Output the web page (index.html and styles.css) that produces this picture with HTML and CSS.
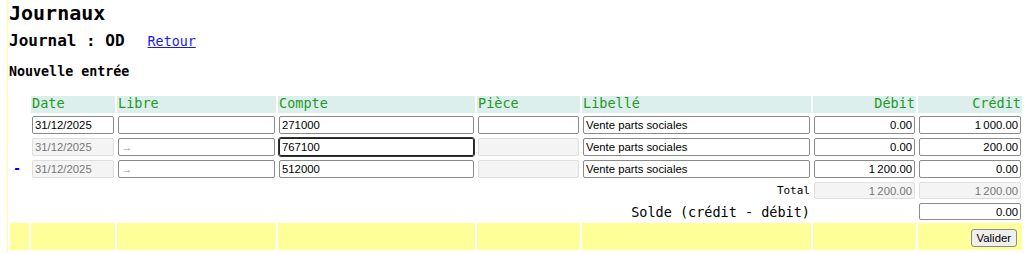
FILE: index.html
```html
<!DOCTYPE html>
<html lang="fr">
<head>
    <meta charset="UTF-8">
    <title>Journaux</title>
    <link rel="stylesheet" href="styles.css">
</head>
<body>
    <h1>Journaux</h1>
    <h2>Journal : OD<a class="retour" href="#">Retour</a></h2>
    <h3>Nouvelle entrée</h3>

    <form>
        <table class="ecriture">
            <colgroup>
                <col style="width: 19px">
                <col style="width: 84px">
                <col style="width: 159px">
                <col style="width: 197px">
                <col style="width: 103px">
                <col style="width: 229px">
                <col style="width: 103px">
                <col style="width: 104px">
            </colgroup>
            <tr class="entete">
                <th class="vide"></th>
                <th>Date</th>
                <th>Libre</th>
                <th>Compte</th>
                <th>Pièce</th>
                <th>Libellé</th>
                <th class="num">Débit</th>
                <th class="num">Crédit</th>
            </tr>
            <tr class="ligne">
                <td></td>
                <td><input type="text" value="31/12/2025"></td>
                <td><input type="text"></td>
                <td><input type="text" value="271000"></td>
                <td><input type="text"></td>
                <td><input type="text" value="Vente parts sociales"></td>
                <td><input class="num" type="text" value="0.00"></td>
                <td><input class="num" type="text" value="1&#8239;000.00"></td>
            </tr>
            <tr class="ligne">
                <td></td>
                <td><input class="grise" type="text" value="31/12/2025" disabled></td>
                <td><input type="text" placeholder="→"></td>
                <td><input class="actif" type="text" value="767100"></td>
                <td><input class="grise" type="text" disabled></td>
                <td><input type="text" value="Vente parts sociales"></td>
                <td><input class="num" type="text" value="0.00"></td>
                <td><input class="num" type="text" value="200.00"></td>
            </tr>
            <tr class="ligne">
                <td><a class="suppr" href="#">-</a></td>
                <td><input class="grise" type="text" value="31/12/2025" disabled></td>
                <td><input type="text" placeholder="→"></td>
                <td><input type="text" value="512000"></td>
                <td><input class="grise" type="text" disabled></td>
                <td><input type="text" value="Vente parts sociales"></td>
                <td><input class="num" type="text" value="1&#8239;200.00"></td>
                <td><input class="num" type="text" value="0.00"></td>
            </tr>
            <tr class="total">
                <td colspan="5"></td>
                <td class="etiquette">Total</td>
                <td><input class="num grise" type="text" value="1&#8239;200.00" disabled></td>
                <td><input class="num grise" type="text" value="1&#8239;200.00" disabled></td>
            </tr>
            <tr class="solde">
                <td colspan="5"></td>
                <td class="etiquette">Solde (crédit - débit)</td>
                <td></td>
                <td><input class="num" type="text" value="0.00"></td>
            </tr>
            <tr class="actions">
                <td></td>
                <td></td>
                <td></td>
                <td></td>
                <td></td>
                <td></td>
                <td></td>
                <td class="bouton"><button type="button">Valider</button></td>
            </tr>
        </table>
    </form>
</body>
</html>
```

FILE: styles.css
```css
body {
    font-family: "DejaVu Sans Mono", monospace;
    color: #000;
    background-color: #fff;
    margin: 0 0 0 7px;
    border-left: 1px solid #ffff99;
    min-height: 100vh;
}
h1 {
    font-size: 20px;
    line-height: 24px;
    margin: 1px 0 0;
    padding-left: 1px;
}
h2 {
    font-size: 16px;
    line-height: 21px;
    margin: 5px 0 0;
    padding-left: 1px;
}
.retour {
    font-size: 13.33px;
    font-weight: normal;
    color: #1a1ae6;
    margin-left: 23px;
}
h3 {
    font-size: 13.33px;
    line-height: 16px;
    margin: 12px 0 0;
    padding-left: 1px;
}
form {
    margin-top: 14px;
}
.ecriture {
    width: 100%;
    table-layout: fixed;
    border-spacing: 2px;
    border-collapse: separate;
}
.ecriture th {
    font-size: 13.5px;
    font-weight: normal;
    line-height: 15px;
    color: #229a22;
    background-color: #dcefed;
    text-align: left;
    padding: 0 1px 2px;
}
.ecriture th.vide {
    background-color: transparent;
}
.ecriture th.num {
    text-align: right;
}
.ecriture td {
    padding: 1px;
    vertical-align: middle;
}
input {
    display: block;
    width: 100%;
    height: 18px;
    box-sizing: border-box;
    margin: 0;
    padding: 0 2px;
    font-family: "Liberation Sans", Arial, sans-serif;
    font-size: 11.33px;
    color: #000;
    background-color: #fff;
    border: 1px solid #8a8a8a;
    border-radius: 2px;
}
input::placeholder {
    color: #9a9a9a;
}
input.num {
    text-align: right;
}
input.grise {
    background-color: #f4f4f4;
    border-color: #dedede;
    color: #777;
}
input.actif {
    border: 1px solid #222;
    outline: 1px solid #333;
    outline-offset: 0;
}
.suppr {
    display: block;
    font-size: 13.33px;
    font-weight: bold;
    line-height: 18px;
    padding-left: 2px;
    color: #0000ee;
    text-decoration: none;
}
.total td {
    height: 17px;
}
.total input,
.solde input {
    height: 17px;
}
.total .etiquette {
    font-size: 11px;
    text-align: right;
}
.solde .etiquette {
    font-size: 13.5px;
    text-align: right;
}
.actions td {
    height: 25px;
    background-color: #ffff99;
}
.actions .bouton {
    text-align: right;
    padding-right: 5px;
}
button {
    height: 18px;
    padding: 0 5px;
    font-family: "Liberation Sans", Arial, sans-serif;
    font-size: 11.33px;
    color: #000;
    background-color: #efefef;
    border: 1px solid #8a8a8a;
    border-radius: 3px;
}
```
